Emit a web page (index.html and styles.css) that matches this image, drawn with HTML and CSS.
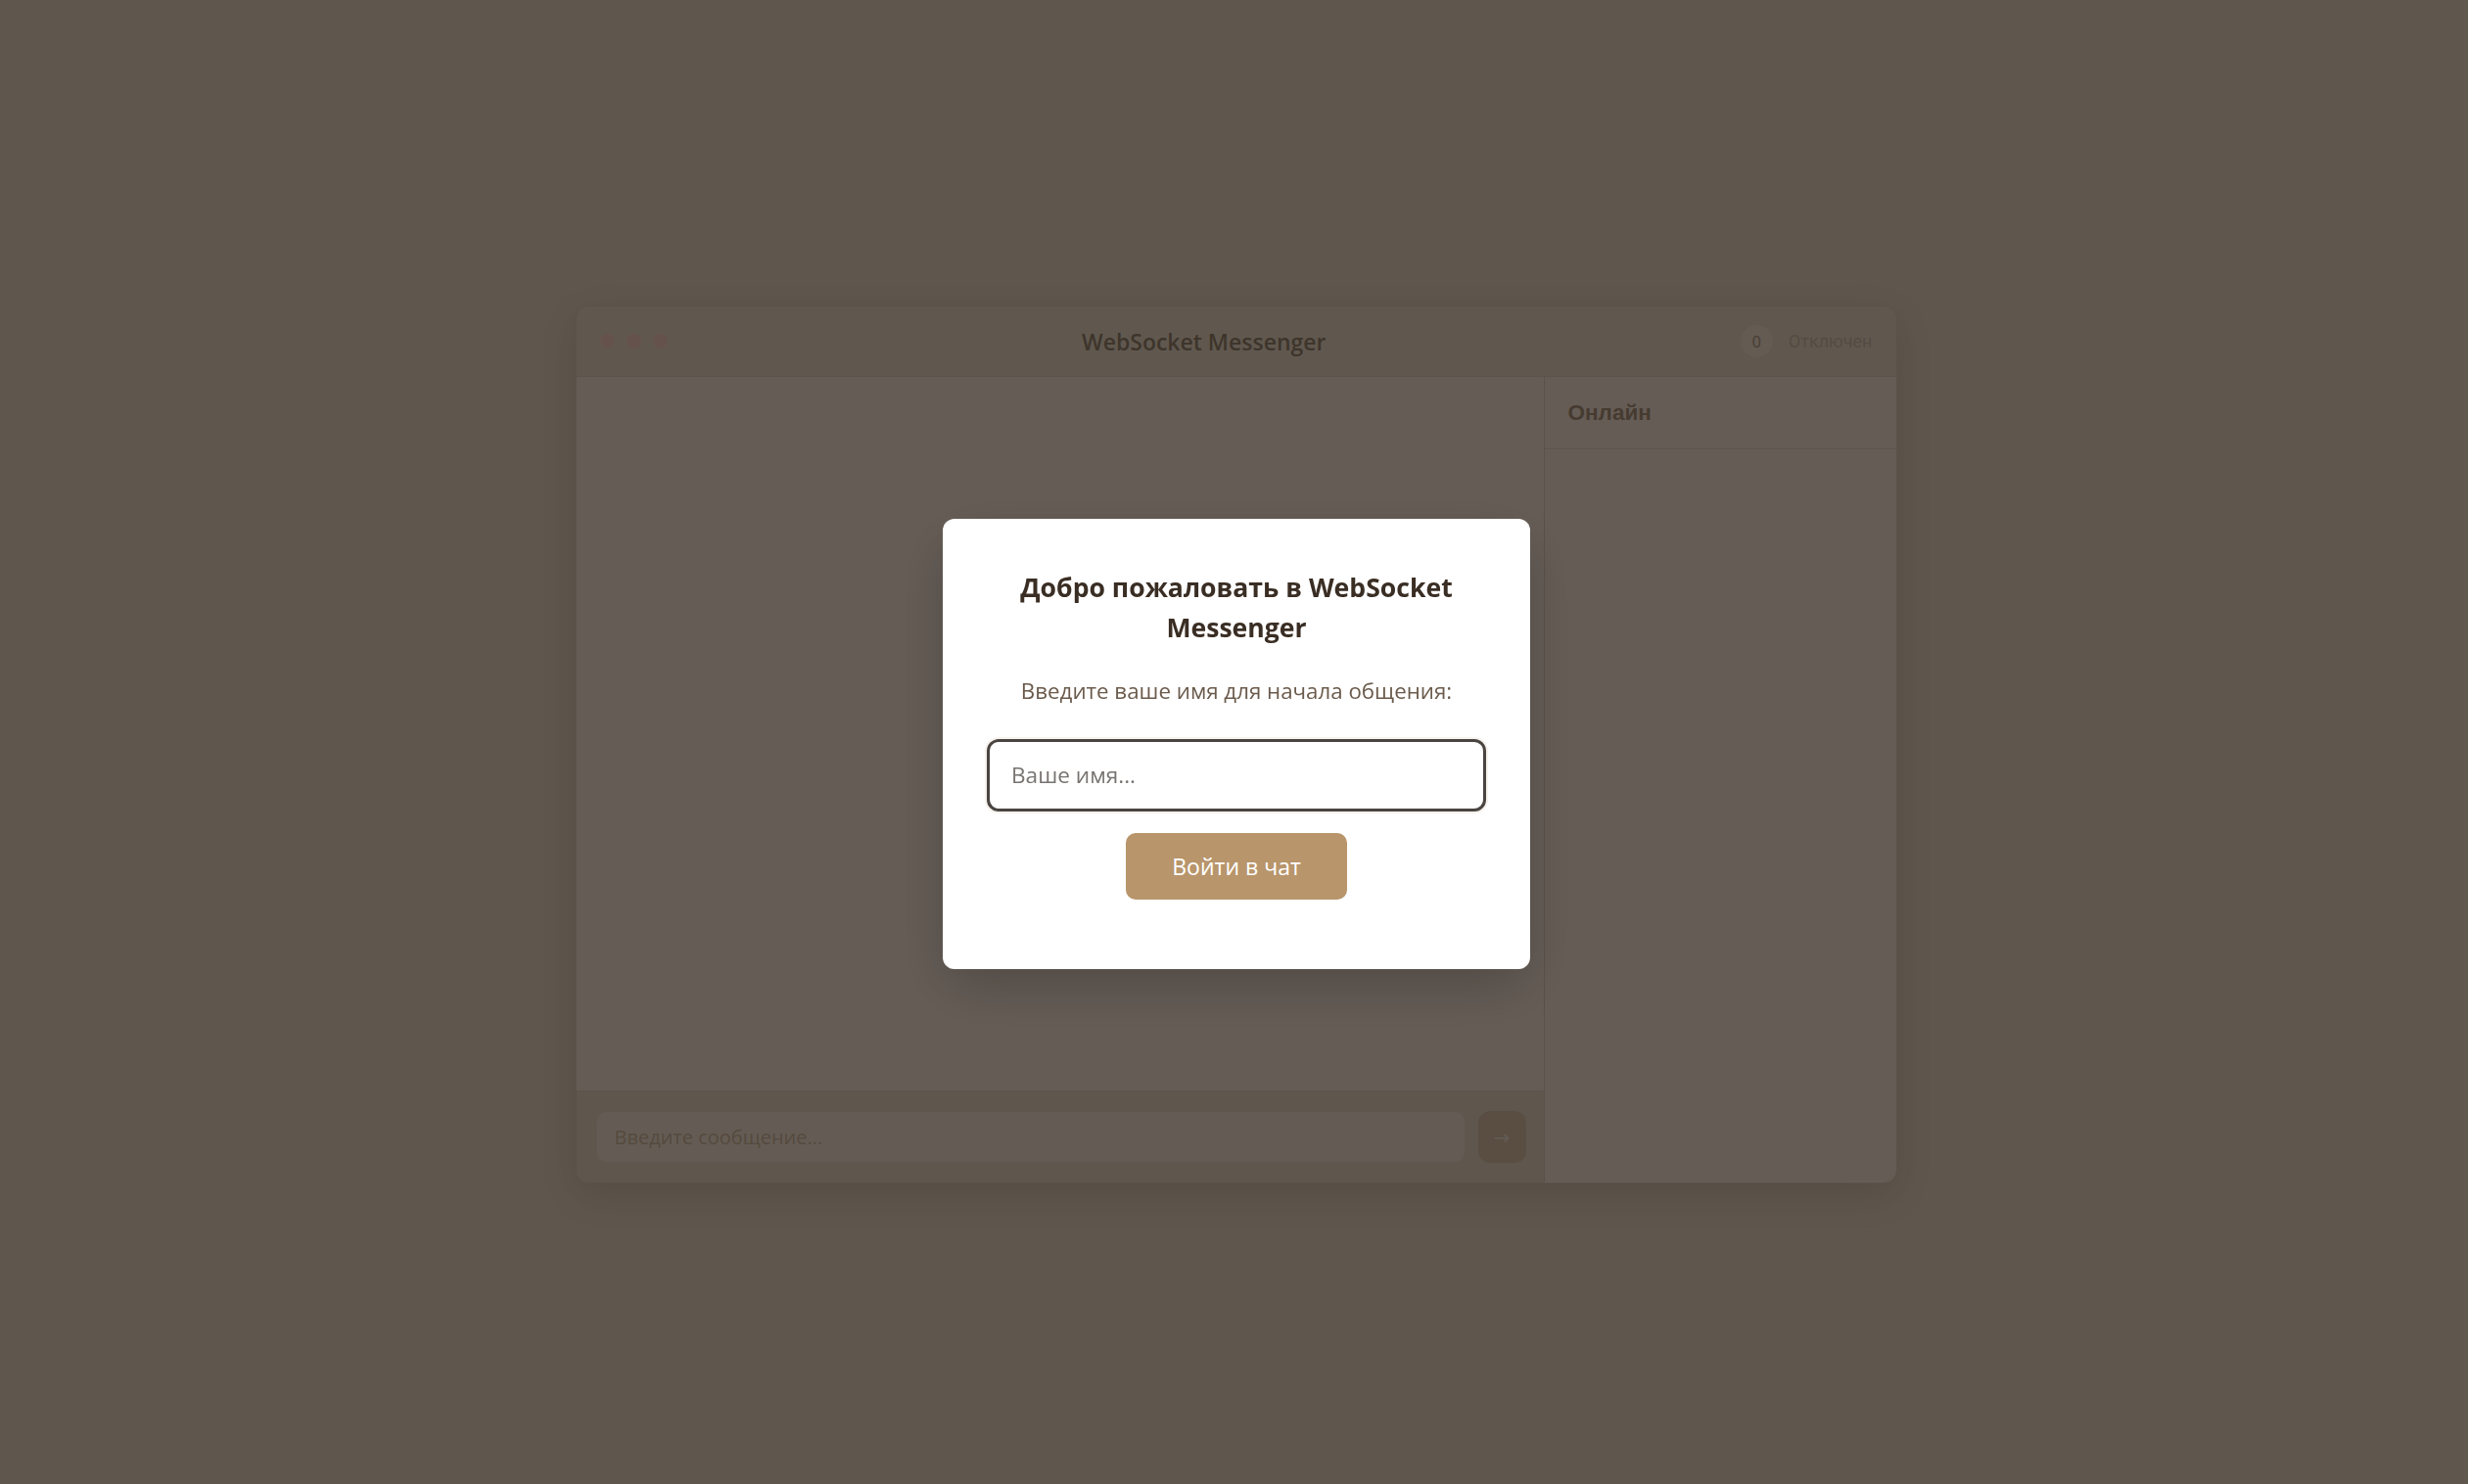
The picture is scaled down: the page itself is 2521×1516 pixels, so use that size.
FILE: index.html
```html
<!DOCTYPE html>
<html lang="ru">
<head>
<meta charset="utf-8">
<title>WebSocket Messenger</title>
<link rel="stylesheet" href="styles.css">
</head>
<body>
  <div class="app">
    <header class="app-header">
      <div class="dots">
        <span class="dot"></span>
        <span class="dot"></span>
        <span class="dot"></span>
      </div>
      <h1 class="app-title">WebSocket Messenger</h1>
      <div class="status">
        <span class="online-count">0</span>
        <span class="status-text">Отключен</span>
      </div>
    </header>
    <div class="app-body">
      <main class="chat">
        <div class="messages"></div>
        <form class="composer">
          <input class="message-input" type="text" placeholder="Введите сообщение..." disabled>
          <button class="send-btn" type="button" disabled>→</button>
        </form>
      </main>
      <aside class="sidebar">
        <div class="sidebar-header">Онлайн</div>
        <ul class="user-list"></ul>
      </aside>
    </div>
  </div>

  <div class="overlay">
    <div class="modal">
      <h2 class="modal-title">Добро пожаловать в WebSocket Messenger</h2>
      <p class="modal-text">Введите ваше имя для начала общения:</p>
      <input class="name-input" type="text" placeholder="Ваше имя..." autofocus>
      <button class="join-btn" type="button">Войти в чат</button>
    </div>
  </div>
</body>
</html>
```

FILE: styles.css
```css
* {
  box-sizing: border-box;
}

html, body {
  height: 100%;
}

body {
  margin: 0;
  padding: 5px 0 0 4px;
  background: #eedac3;
  font-family: "Open Sans", "Noto Sans", sans-serif;
  display: flex;
  align-items: center;
  justify-content: center;
}

/* ---------- app window ---------- */
.app {
  width: 1350px;
  height: 897px;
  display: flex;
  flex-direction: column;
  border: 1px solid #e4d0bc;
  border-radius: 14px;
  overflow: hidden;
  background: #efdcc6;
  box-shadow: 0 12px 40px rgba(90, 60, 30, 0.18);
}

.app-header {
  height: 72px;
  flex: none;
  display: flex;
  align-items: center;
  justify-content: space-between;
  padding: 0 24px;
  border-bottom: 1px solid #e3cfb9;
  background: #efdcc6;
}

.dots {
  display: flex;
  gap: 12px;
}

.dot {
  width: 15px;
  height: 15px;
  border-radius: 50%;
  background: #ffcdbf;
}

.app-title {
  margin: 0;
  font-size: 23px;
  font-weight: 600;
  color: #9c856c;
}

.status {
  display: flex;
  align-items: center;
  gap: 16px;
  font-family: Roboto, "Liberation Sans", sans-serif;
}

.online-count {
  width: 33px;
  height: 33px;
  border-radius: 50%;
  background: #fae3cf;
  color: #b9a08a;
  font-size: 17px;
  display: flex;
  align-items: center;
  justify-content: center;
}

.status-text {
  font-size: 18px;
  color: #d2bca5;
}

.app-body {
  flex: 1;
  display: flex;
  min-height: 0;
}

/* ---------- chat column ---------- */
.chat {
  flex: 1;
  display: flex;
  flex-direction: column;
}

.messages {
  flex: 1;
  background: #fce7d6;
  border-bottom: 1px solid #e6d2be;
}

.composer {
  height: 93px;
  flex: none;
  display: flex;
  align-items: center;
  gap: 13px;
  padding: 0 18px 0 20px;
  background: #eedac3;
  margin: 0;
}

.message-input {
  flex: 1;
  height: 53px;
  border: 1px solid #f0dcc7;
  border-radius: 12px;
  background: #fbe6d3;
  padding: 0 18px;
  font-family: "Open Sans", "Noto Sans", sans-serif;
  font-size: 20px;
  color: #8a7660;
}

.message-input::placeholder {
  color: #d4b99b;
}

.send-btn {
  width: 49px;
  height: 53px;
  border: none;
  border-radius: 12px;
  background: #e0c4a6;
  color: #f6e6d5;
  font-size: 20px;
  padding: 0;
  font-family: "DejaVu Sans", sans-serif;
}

/* ---------- sidebar ---------- */
.sidebar {
  width: 360px;
  flex: none;
  display: flex;
  flex-direction: column;
  background: #fce7d6;
  border-left: 1px solid #e1cdb9;
  border-bottom-right-radius: 12px;
}

.sidebar-header {
  height: 74px;
  flex: none;
  display: flex;
  align-items: center;
  padding: 0 24px;
  border-bottom: 1px solid #e8d4c0;
  font-family: "Liberation Sans", Arial, sans-serif;
  font-weight: 700;
  font-size: 22.5px;
  color: #b09379;
}

.user-list {
  flex: 1;
  list-style: none;
  margin: 0;
  padding: 0;
}

/* ---------- modal ---------- */
.overlay {
  position: fixed;
  inset: 0;
  padding: 3px 0 0 5px;
  background: rgba(0, 0, 0, 0.6);
  display: flex;
  align-items: center;
  justify-content: center;
}

.modal {
  width: 600px;
  background: #ffffff;
  border-radius: 12px;
  padding: 50px 45px 71px;
  display: flex;
  flex-direction: column;
  align-items: center;
  text-align: center;
  box-shadow: 0 20px 60px rgba(0, 0, 0, 0.2);
}

.modal-title {
  margin: 0 0 27px;
  font-size: 26.6px;
  line-height: 41px;
  font-weight: 700;
  color: #3a2e24;
}

.modal-text {
  margin: 0 0 32px;
  font-size: 22.3px;
  line-height: 34px;
  color: #6b5b4c;
}

.name-input {
  width: 100%;
  height: 74px;
  border: 3px solid #4a4541;
  border-radius: 12px;
  padding: 0 20px 0 22px;
  font-family: "Open Sans", "Noto Sans", sans-serif;
  font-size: 22.6px;
  color: #3a2e24;
  outline: none;
  box-shadow: 0 0 0 2px rgba(184, 149, 107, 0.12);
  margin: 0 0 22px;
}

.name-input::placeholder {
  color: #777370;
}

.join-btn {
  width: 226px;
  height: 68px;
  border: none;
  border-radius: 10px;
  background: #b8956b;
  color: #ffffff;
  font-family: "Open Sans", "Noto Sans", sans-serif;
  font-size: 23px;
  padding: 0;
}
```
